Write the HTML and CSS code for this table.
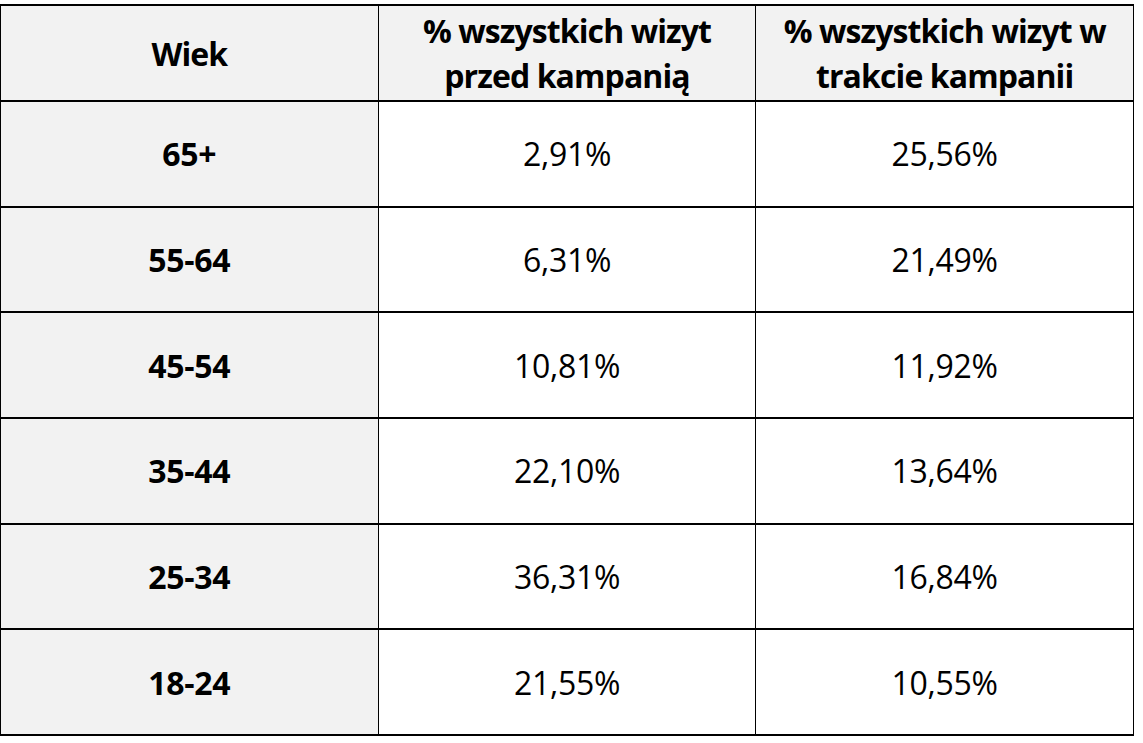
FILE: index.html
```html
<!DOCTYPE html>
<html lang="pl">
<head>
<meta charset="utf-8">
<title>Wizyty wg wieku</title>
<link rel="stylesheet" href="styles.css">
</head>
<body>
<table class="stats">
  <colgroup>
    <col class="col-w">
    <col class="col-w">
    <col class="col-w">
  </colgroup>
  <thead>
    <tr class="head-row">
      <th class="col-age">Wiek</th>
      <th>% wszystkich wizyt<br>przed kampanią</th>
      <th>% wszystkich wizyt w<br>trakcie kampanii</th>
    </tr>
  </thead>
  <tbody>
    <tr><th class="col-age">65+</th><td>2,91%</td><td>25,56%</td></tr>
    <tr><th class="col-age">55-64</th><td>6,31%</td><td>21,49%</td></tr>
    <tr><th class="col-age">45-54</th><td>10,81%</td><td>11,92%</td></tr>
    <tr><th class="col-age">35-44</th><td>22,10%</td><td>13,64%</td></tr>
    <tr><th class="col-age">25-34</th><td>36,31%</td><td>16,84%</td></tr>
    <tr><th class="col-age">18-24</th><td>21,55%</td><td>10,55%</td></tr>
  </tbody>
</table>
</body>
</html>
```

FILE: styles.css
```css
html, body {
  margin: 0;
  padding: 0;
  background: #ffffff;
}

body {
  padding-top: 4px;
  font-family: "Open Sans", "Liberation Sans", sans-serif;
  color: #000000;
}

.stats {
  border-collapse: collapse;
  table-layout: fixed;
  width: 1134px;
}

.col-w {
  width: 33.333%;
}

.stats th,
.stats td {
  padding: 0;
  text-align: center;
  vertical-align: middle;
  border-left: 1px solid #000;
  border-right: 1px solid #000;
  border-top: 2px solid #000;
  border-bottom: 2px solid #000;
  font-size: 32px;
  line-height: 45px;
  letter-spacing: -0.3px;
}

.stats th {
  font-weight: 700;
}

.stats td {
  font-weight: 400;
  background: #ffffff;
}

.head-row th {
  background: #f2f2f2;
  height: 94px;
  letter-spacing: -0.9px;
}

.stats tbody tr {
  height: 105.7px;
}

.col-age {
  background: #f2f2f2;
}
```
